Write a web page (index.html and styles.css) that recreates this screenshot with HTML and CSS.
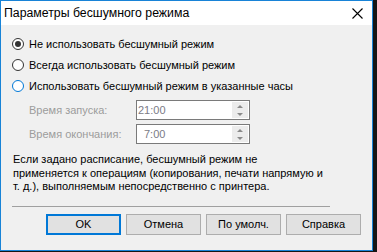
FILE: index.html
```html
<!DOCTYPE html>
<html lang="ru">
<head>
    <meta charset="UTF-8">
    <title>Параметры бесшумного режима</title>
    <link rel="stylesheet" href="styles.css">
</head>
<body>
    <div class="window">
        <div class="titlebar">
            <span class="title">Параметры бесшумного режима</span>
            <span class="close">
                <svg width="11" height="11" viewBox="0 0 11 11"><path d="M0.5 0.5 L10.5 10.5 M10.5 0.5 L0.5 10.5" stroke="#000" stroke-width="1.1" fill="none"/></svg>
            </span>
        </div>
        <div class="content">
            <div class="radio-row">
                <span class="radio checked"></span>
                <span>Не использовать бесшумный режим</span>
            </div>
            <div class="radio-row">
                <span class="radio"></span>
                <span>Всегда использовать бесшумный режим</span>
            </div>
            <div class="radio-row">
                <span class="radio focus"></span>
                <span>Использовать бесшумный режим в указанные часы</span>
            </div>

            <div class="time-row">
                <span class="time-label">Время запуска:</span>
                <div class="spin-box">
                    <span class="spin-value">21:00</span>
                    <span class="spin-buttons">
                        <span class="arrow up"></span>
                        <span class="arrow down"></span>
                    </span>
                </div>
            </div>
            <div class="time-row">
                <span class="time-label">Время окончания:</span>
                <div class="spin-box">
                    <span class="spin-value pad">7:00</span>
                    <span class="spin-buttons">
                        <span class="arrow up"></span>
                        <span class="arrow down"></span>
                    </span>
                </div>
            </div>

            <p class="note">Если задано расписание, бесшумный режим не<br>применяется к операциям (копирования, печати напрямую и<br>т. д.), выполняемым непосредственно с принтера.</p>

            <div class="separator"></div>

            <div class="buttons">
                <button class="default">OK</button>
                <button>Отмена</button>
                <button>По умолч.</button>
                <button>Справка</button>
            </div>
        </div>
    </div>
</body>
</html>
```

FILE: styles.css
```css
* {
    box-sizing: border-box;
}

body {
    margin: 0;
    background-color: #151515;
    font-family: "Liberation Sans", Arial, sans-serif;
    font-size: 11px;
    color: #000;
}

.window {
    width: 373px;
    height: 251px;
    border: 1px solid #1883d7;
    background-color: #f0f0f0;
}

.titlebar {
    height: 24px;
    background-color: #fff;
    display: flex;
    align-items: center;
    justify-content: space-between;
    padding: 0 9px 0 3px;
}

.title {
    font-size: 12.3px;
}

.close {
    display: flex;
}

.content {
    padding: 8px 11px 0 11px;
}

.radio-row {
    display: flex;
    align-items: center;
    height: 21px;
    gap: 5px;
}

.radio {
    width: 12px;
    height: 12px;
    border: 1px solid #333;
    border-radius: 50%;
    background-color: #fff;
    display: flex;
    align-items: center;
    justify-content: center;
}

.radio.checked::after {
    content: '';
    width: 6px;
    height: 6px;
    border-radius: 50%;
    background-color: #333;
}

.radio.focus {
    border-color: #0078d7;
}

.time-row {
    display: flex;
    align-items: center;
    margin-top: 4px;
    height: 20px;
}

.time-row + .time-row {
    margin-top: 4px;
}

.time-label {
    width: 124px;
    padding-left: 17px;
    color: #9c9c9c;
}

.spin-box {
    width: 114px;
    height: 20px;
    border: 1px solid #7a7a7a;
    background-color: #fff;
    display: flex;
    align-items: center;
    justify-content: space-between;
}

.spin-value {
    padding-left: 1px;
    color: #7b7b86;
}

.spin-value.pad {
    padding-left: 7px;
}

.spin-buttons {
    width: 16px;
    height: 16px;
    margin-right: 1px;
    background-color: #ececec;
    display: flex;
    flex-direction: column;
    align-items: center;
    justify-content: space-around;
}

.arrow {
    width: 0;
    height: 0;
    border-left: 3px solid transparent;
    border-right: 3px solid transparent;
}

.arrow.up {
    border-bottom: 3px solid #8a8a8a;
}

.arrow.down {
    border-top: 3px solid #8a8a8a;
}

.note {
    margin: 9px 0 0 0;
    padding-left: 1px;
    line-height: 13.5px;
}

.separator {
    width: 318px;
    height: 1px;
    margin-top: 12px;
    background-color: #a0a0a0;
}

.buttons {
    display: flex;
    justify-content: flex-end;
    gap: 5px;
    margin-top: 7px;
}

button {
    width: 75px;
    height: 21px;
    margin: 0;
    padding: 0;
    font-family: inherit;
    font-size: 11px;
    font-weight: normal;
    color: #000;
    background-color: #e1e1e1;
    border: 1px solid #adadad;
}

button.default {
    border: 2px solid #0078d7;
}
```
